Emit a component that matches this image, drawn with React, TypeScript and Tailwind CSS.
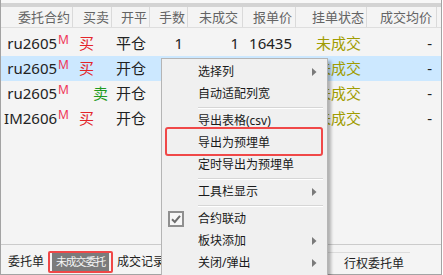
import React from "react";

const COLS = "grid grid-cols-[72px_39px_38px_38px_55px_53px_71px_70px]";

type Row = {
  c: string;
  bs: "买" | "卖";
  oc: string;
  n: string;
  u: string;
  p: string;
  s: string;
  a: string;
  hl?: boolean;
};

const rows: Row[] = [
  { c: "ru2605", bs: "买", oc: "平仓", n: "1", u: "1", p: "16435", s: "未成交", a: "-" },
  { c: "ru2605", bs: "买", oc: "开仓", n: "", u: "", p: "", s: "未成交", a: "-", hl: true },
  { c: "ru2605", bs: "卖", oc: "开仓", n: "", u: "", p: "", s: "未成交", a: "-" },
  { c: "IM2606", bs: "买", oc: "开仓", n: "", u: "", p: "", s: "未成交", a: "-" },
];

const headers = ["委托合约", "买卖", "开平", "手数", "未成交", "报单价", "挂单状态", "成交均价"];

function Arrow() {
  return (
    <svg width="5" height="8" viewBox="0 0 5 8">
      <path d="M0 0 L4.5 4 L0 8 Z" fill="#7a7a7a" />
    </svg>
  );
}

function Check() {
  return (
    <svg width="16" height="16" viewBox="0 0 16 16">
      <rect x="1" y="1" width="14" height="14" fill="#f7f7f7" stroke="#8f8f8f" strokeWidth="2" />
      <path d="M4 8.2 L6.8 11 L12 4.8" fill="none" stroke="#6e6e6e" strokeWidth="2" />
    </svg>
  );
}

type MenuEntry = { t: string; arrow?: boolean; check?: boolean } | "sep";

const menu: MenuEntry[] = [
  { t: "选择列", arrow: true },
  { t: "自动适配列宽" },
  "sep",
  { t: "导出表格(csv)" },
  { t: "导出为预埋单" },
  { t: "定时导出为预埋单" },
  "sep",
  { t: "工具栏显示", arrow: true },
  "sep",
  { t: "合约联动", check: true },
  { t: "板块添加", arrow: true },
  { t: "关闭/弹出", arrow: true },
];

export default function App() {
  return (
    <div className="w-[443px] h-[275px] bg-white relative overflow-hidden font-['Noto_Sans','Noto_Sans_CJK_SC',sans-serif]">
      <div className="w-[442px] h-[275px] border-x border-b border-[#a3a3a3] bg-[#f4f4f4] flex flex-col">
        <div className="h-[3px] bg-[#f7f7f7]" />
        <div className="h-[4px] bg-[#d3d3d3]" />
        {/* header */}
        <div className={`${COLS} h-[21px] border-b border-[#dedede] text-[13px] leading-[20px] text-[#646464]`}>
          {headers.map((h, i) => (
            <div
              key={h}
              className={`text-right border-r border-[#dadada] ${i === 4 || i === 7 ? "pr-[4px]" : i === 5 ? "pr-[3px]" : "pr-[2px]"} whitespace-nowrap overflow-hidden`}
            >
              {h}
            </div>
          ))}
        </div>
        {/* body */}
        <div className="pt-[3px] flex-1 text-[15px] leading-[25px] text-[#222]">
          {rows.map((r, i) => (
            <div key={i} className={`${COLS} h-[25px] ${r.hl ? "bg-[#cce8ff]" : ""}`}>
              <div className="text-right pr-[4px] whitespace-nowrap">
                {r.c}
                <span className="relative -top-[5px] ml-[1px] text-[12px] text-[#ef3658]">M</span>
              </div>
              <div className={r.bs === "买" ? "text-left pl-[6px] text-[#e3262b]" : "text-right pr-[4px] text-[#1f9a1f]"}>
                {r.bs}
              </div>
              <div className="text-center">{r.oc}</div>
              <div className="text-right pr-[5px]">{r.n}</div>
              <div className="text-right pr-[4px]">{r.u}</div>
              <div className="text-right pr-[4px]">{r.p}</div>
              <div className="text-right pr-[6px] text-[#a09c00]">{r.s}</div>
              <div className="text-right pr-[5px]">{r.a}</div>
            </div>
          ))}
        </div>
        {/* tab bar */}
        <div className="h-[30px] border-t border-[#cbcbcb] flex items-center pt-[5px] text-[12px] leading-[18px] text-[#222] whitespace-nowrap">
          <span className="pl-[7px]">委托单</span>
          <span className="ml-[8px] w-[57px] h-[18px] bg-[#7b7b7b] text-[#f4f4f4] text-[11px] tracking-[-1.2px] flex items-center justify-center">
            未成交委托
          </span>
          <span className="ml-[8px]">成交记录</span>
          <span className="ml-[8px] w-[161px]" />
          <div className="ml-[-6px] mt-[2px] self-stretch w-[82px] border-t border-[#dcdcdc] pl-[16px] flex items-center">
            行权委托单
          </div>
        </div>
      </div>

      {/* context menu */}
      <div className="absolute left-[161px] top-[58px] w-[167px] h-[230px] bg-[#f0f0f0] border border-[#b5b5b5] shadow-[3px_3px_3px_rgba(0,0,0,0.28)] pt-[2px] text-[12px] text-[#1a1a1a]">
        {menu.map((m, i) =>
          m === "sep" ? (
            <div key={i} className="h-[5px] flex flex-col justify-center pl-[36px] pr-[4px]">
              <div className="border-t border-[#d6d6d6]" />
              <div className="border-t border-white" />
            </div>
          ) : (
            <div key={i} className="h-[22px] flex items-center leading-[22px]">
              <div className="w-[36px] h-[22px] flex items-center pl-[6px]">{m.check ? <Check /> : null}</div>
              <div className="flex-1 whitespace-nowrap">{m.t}</div>
              <div className="w-[16px] flex items-center pl-[1px]">{m.arrow ? <Arrow /> : null}</div>
            </div>
          )
        )}
      </div>

      {/* annotation boxes */}
      <div className="absolute left-[165px] top-[127px] w-[158px] h-[29px] border-2 border-[#f04848] rounded-[3px]" />
      <div className="absolute left-[48px] top-[251px] w-[65px] h-[22px] border-2 border-[#f04848] rounded-[2px]" />
    </div>
  );
}
